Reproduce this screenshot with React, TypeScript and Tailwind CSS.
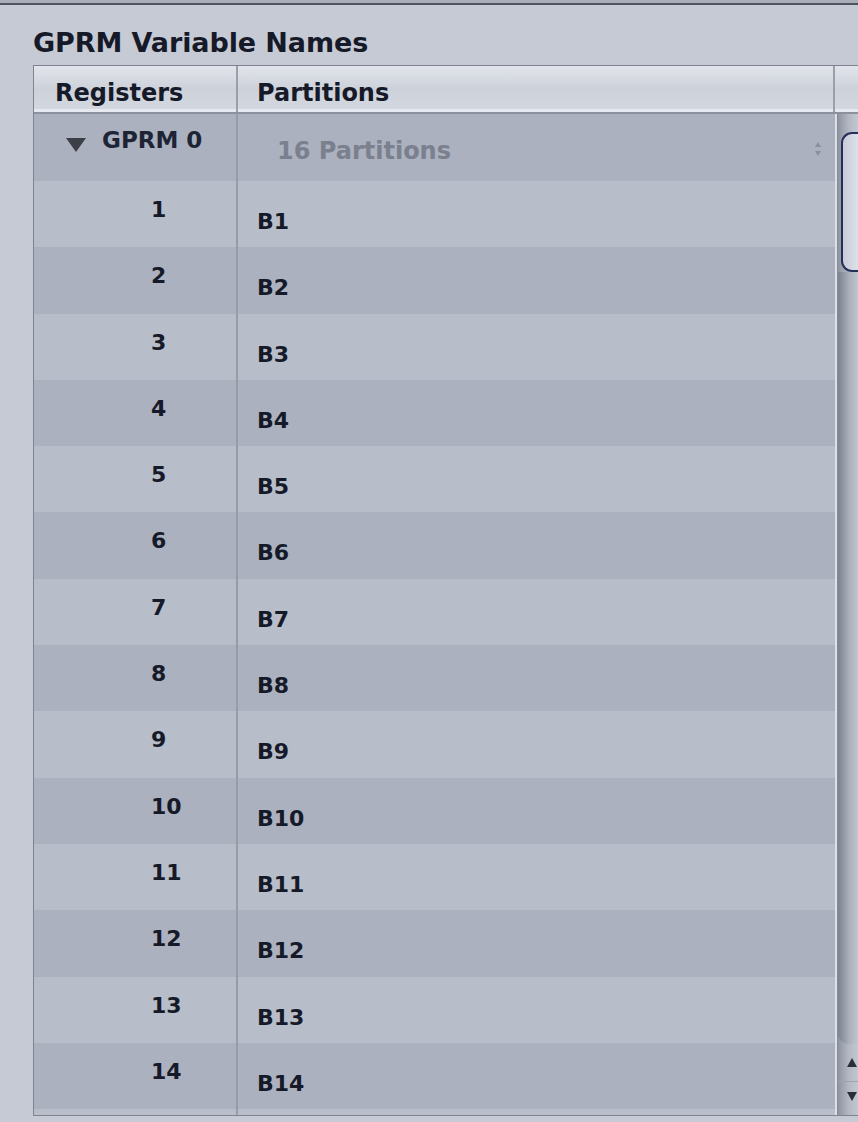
const rows = Array.from({ length: 14 }, (_, i) => i + 1);

function Stepper() {
  return (
    <svg width="8" height="18" viewBox="0 0 8 18" className="shrink-0">
      <path d="M4 2 L7 7 L1 7 Z" fill="#8a8f9b" />
      <path d="M1 11 L7 11 L4 16 Z" fill="#8a8f9b" />
    </svg>
  );
}

function Scrollbar() {
  return (
    <div className="flex flex-col h-full w-[22px] border-l border-[#858a96] bg-gradient-to-r from-[#8f94a1] via-[#b2b7c3] to-[#c5c9d3]">
      <div className="h-[18px]" />
      {/* thumb */}
      <div className="ml-[3px] h-[140px] rounded-l-[11px] border-2 border-r-0 border-[#25305a] bg-gradient-to-r from-[#c7ccd8] to-[#dfe2ea]" />
      <div className="flex-1 rounded-bl-[11px] bg-gradient-to-r from-[#7d8290] via-[#a8adb9] to-[#c4c8d2]" />
      <div className="flex h-[38px] items-center justify-end pr-[2px] border-b border-[#9ea3ae]">
        <svg width="10" height="9" viewBox="0 0 10 9">
          <path d="M5 0 L10 9 L0 9 Z" fill="#2a2e3a" />
        </svg>
      </div>
      <div className="flex h-[33px] items-start pt-[10px] justify-end pr-[2px]">
        <svg width="10" height="9" viewBox="0 0 10 9">
          <path d="M0 0 L10 0 L5 9 Z" fill="#2a2e3a" />
        </svg>
      </div>
    </div>
  );
}

export default function App() {
  return (
    <div
      className="w-[858px] h-[1122px] overflow-hidden bg-[#c6cad5] text-[#161a28] flex flex-col"
      style={{ fontFamily: '"DejaVu Sans", "Liberation Sans", sans-serif' }}
    >
      {/* window edge */}
      <div className="h-[3px] bg-[#a9aeb9]" />
      <div className="h-[2px] bg-[#4e5361]" />

      {/* title */}
      <div className="pl-[33px] pt-[23px] h-[60px] text-[27px] font-bold tracking-[-0.1px] leading-[30px]">
        GPRM Variable Names
      </div>

      {/* table */}
      <div className="ml-[33px] h-[1051px] flex flex-col border border-r-0 border-[#7f8490] bg-[#b9beca]">
        {/* header */}
        <div className="flex h-[48px] shrink-0 border-b-2 border-[#8c919d] bg-gradient-to-b from-[#e1e4ea] via-[#cdd1da] to-[#d4d8e0] text-[24px] font-bold leading-[36px]">
          <div className="w-[204px] border-r-2 border-[#9a9faa] pl-[21px] pt-[9px] shadow-[inset_0_-3px_0_#e6e9ef]">Registers</div>
          <div className="w-[597px] border-r-2 border-[#9a9faa] pl-[19px] pt-[9px] shadow-[inset_0_-3px_0_#e6e9ef]">Partitions</div>
          <div className="flex-1 shadow-[inset_0_-3px_0_#e6e9ef]" />
        </div>

        {/* body */}
        <div className="flex flex-1 min-h-0">
          <div className="w-[801px] flex flex-col">
            {/* GPRM 0 group row */}
            <div className="flex h-[67px] shrink-0 bg-[#abb1be]">
              <div className="w-[204px] border-r-2 border-[#979ca8] flex items-start pl-[32px] pt-[9px] gap-[16px] text-[23px] font-bold leading-[34px]">
                <svg width="20" height="14" viewBox="0 0 20 14" className="mt-[15px] shrink-0">
                  <path d="M0 0 L20 0 L10 14 Z" fill="#3c3f48" />
                </svg>
                <span className="text-[#1e2436]">GPRM 0</span>
              </div>
              <div className="flex-1 flex items-start justify-between pl-[39px] pr-[13px] pt-[19px]">
                <span className="text-[24px] font-bold leading-[36px] text-[#7a808e]">16 Partitions</span>
                <div className="pt-[7px]">
                  <Stepper />
                </div>
              </div>
            </div>

            {rows.map((n) => (
              <div
                key={n}
                className={`flex h-[66.3px] shrink-0 ${n % 2 === 1 ? "bg-[#b8bdca]" : "bg-[#abb1be]"}`}
              >
                <div className="w-[204px] border-r-2 border-[#979ca8] pl-[117px] pt-[12px] text-[22px] font-bold leading-[34px]">
                  {n}
                </div>
                <div className="flex-1 pl-[19px] pt-[24px] text-[22px] font-bold leading-[34px]">B{n}</div>
              </div>
            ))}
            <div className="flex-1 flex">
              <div className="w-[204px] border-r-2 border-[#979ca8]" />
            </div>
          </div>
          <div className="w-[2px] bg-[#dde0e7]" />
          <div className="flex-1 min-w-0">
            <Scrollbar />
          </div>
        </div>
      </div>
      <div className="flex-1" />
    </div>
  );
}
